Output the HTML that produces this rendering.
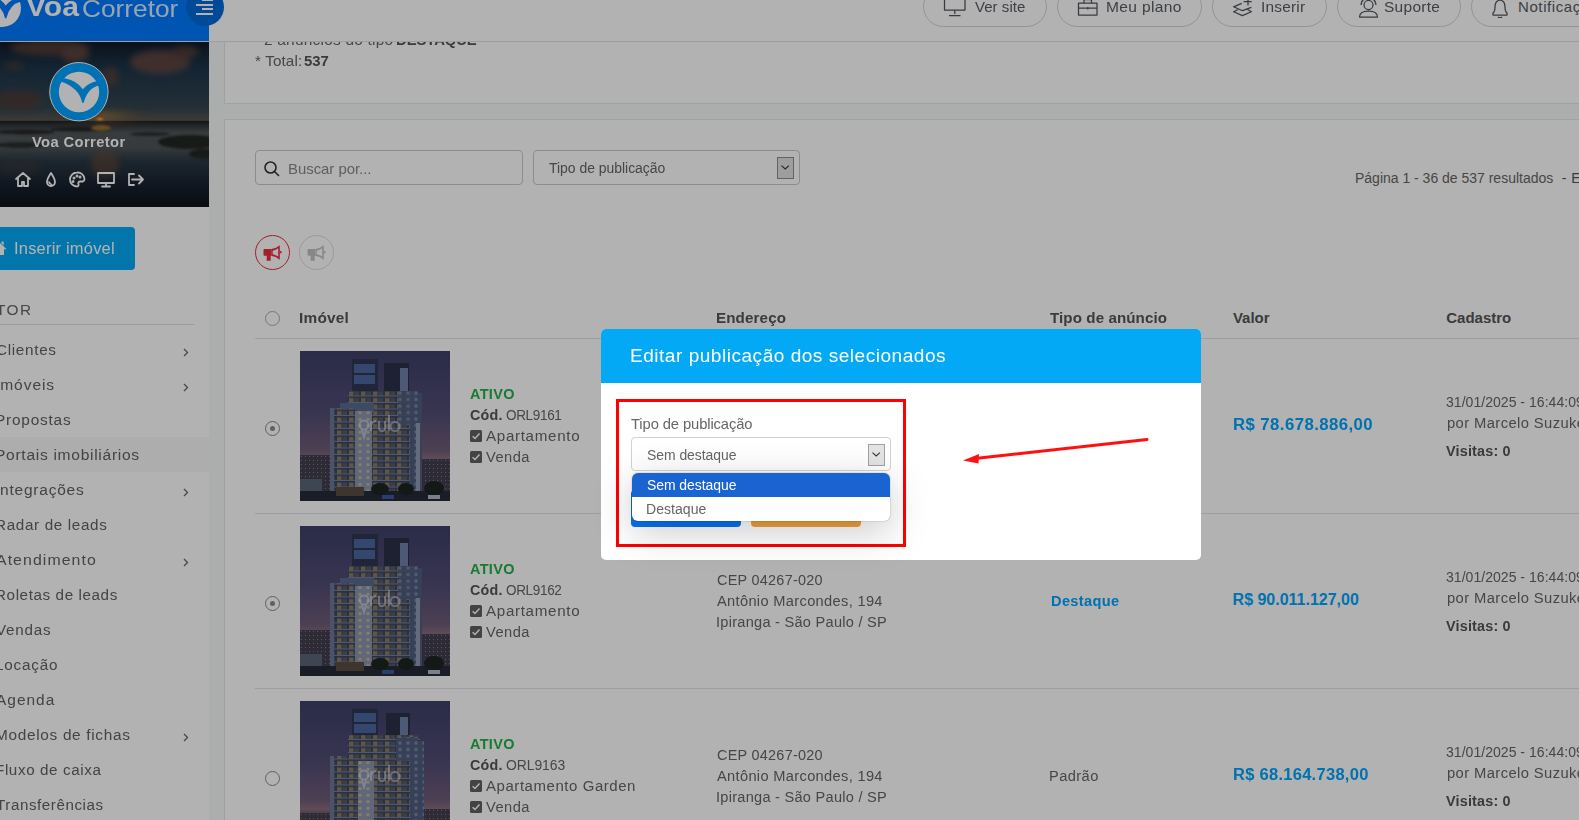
<!DOCTYPE html>
<html><head><meta charset="utf-8">
<style>
*{box-sizing:border-box;margin:0;padding:0}
html,body{width:1579px;height:820px;overflow:hidden;background:#f6f9f8;font-family:"Liberation Sans",sans-serif;color:#555}
.a{position:absolute}
.t{position:absolute;line-height:1;white-space:nowrap}
#page{position:absolute;left:0;top:0;width:1579px;height:820px;overflow:hidden}
#backdrop{position:absolute;left:0;top:0;width:1579px;height:820px;background:rgba(0,0,0,0.3)}
.hb{top:-14px;height:41px;border:1px solid #cfd4da;border-radius:21px}
.cb{width:12px;height:12px;background:#606060;border-radius:1.5px}
</style></head><body>
<svg width="0" height="0" style="position:absolute">
  <defs>
    <linearGradient id="bsky" x1="0" y1="0" x2="0" y2="1">
      <stop offset="0" stop-color="#3e4068"/>
      <stop offset="0.4" stop-color="#514c74"/>
      <stop offset="0.66" stop-color="#6e5c78"/>
      <stop offset="0.72" stop-color="#8a6e7e"/>
      <stop offset="0.78" stop-color="#4e4a5e"/>
      <stop offset="1" stop-color="#2e3040"/>
    </linearGradient>
    <pattern id="balc" width="12" height="6.5" patternUnits="userSpaceOnUse">
      <rect width="12" height="6.5" fill="#3a4560"/>
      <rect x="1" y="1.5" width="4.5" height="4" fill="#8c7a62"/>
      <rect x="6.5" y="1.5" width="4.5" height="4" fill="#5a5a62"/>
      <rect x="0" y="5.5" width="12" height="1" fill="#7280a0"/>
    </pattern>
    <pattern id="wall" width="8" height="6.5" patternUnits="userSpaceOnUse">
      <rect width="8" height="6.5" fill="#4e5c7e"/>
      <rect x="2.5" y="1.5" width="3" height="3" fill="#7c88a4"/>
    </pattern>
    <pattern id="lwall" width="8" height="6.5" patternUnits="userSpaceOnUse">
      <rect width="8" height="6.5" fill="#8a94ac"/>
      <rect x="2.5" y="2" width="3" height="2.5" fill="#c8b894"/>
    </pattern>
    <pattern id="city" width="4" height="4" patternUnits="userSpaceOnUse">
      <rect width="4" height="4" fill="#403e50"/>
      <rect x="1" y="1" width="1" height="1" fill="#8a7a60"/>
    </pattern>
    <g id="orulo" fill="none" stroke="#e8e8f0" stroke-opacity="0.5" stroke-width="2">
      <circle cx="64" cy="74" r="4.5"/>
      <path d="M62 79 L64 86 L66 79"/>
      <path d="M71 70 V80 M71 74 Q73 70 76 70 M79 70 V77 Q79 80 82 80 Q85 80 85 77 V70 M85 79 V80 M89 64 V80"/>
      <circle cx="95" cy="75.5" r="4.5"/>
    </g>
    <symbol id="bld1" viewBox="0 0 150 150">
      <rect width="150" height="150" fill="url(#bsky)"/>
      <rect x="0" y="104" width="32" height="46" fill="url(#city)"/>
      <rect x="120" y="108" width="30" height="42" fill="url(#city)"/>
      <rect x="0" y="128" width="22" height="12" fill="#5a6478"/>
      <!-- crowns -->
      <rect x="52" y="8" width="26" height="36" fill="#2e3650"/>
      <rect x="54" y="13" width="21" height="9" fill="#4a66a0"/>
      <rect x="54" y="24" width="21" height="9" fill="#4a66a0"/>
      <rect x="84" y="12" width="25" height="44" fill="#2a3148"/>
      <rect x="100" y="17" width="8" height="28" fill="#7080a8"/>
      <!-- main mass -->
      <rect x="48" y="40" width="72" height="102" fill="url(#balc)"/>
      <rect x="40" y="52" width="34" height="10" fill="#5a6a90"/>
      <rect x="30" y="57" width="26" height="86" fill="url(#balc)"/>
      <rect x="30" y="57" width="4" height="86" fill="#6a7898"/>
      <rect x="55" y="60" width="17" height="82" fill="url(#lwall)"/>
      <rect x="98" y="40" width="20" height="34" fill="url(#wall)" opacity="0.85"/>
      <rect x="110" y="42" width="12" height="100" fill="url(#wall)"/>
      <rect x="116" y="72" width="4" height="70" fill="#8e9ab4"/>
      <!-- ground -->
      <rect x="0" y="140" width="150" height="10" fill="#262a36"/>
      <ellipse cx="80" cy="138" rx="9" ry="6" fill="#1a2420"/>
      <ellipse cx="106" cy="138" rx="8" ry="6" fill="#1a2420"/>
      <ellipse cx="134" cy="137" rx="10" ry="7" fill="#1a2420"/>
      <rect x="36" y="136" width="28" height="9" fill="#5a4e42"/>
      <rect x="82" y="144" width="12" height="4" fill="#3a5aa0"/>
      <rect x="128" y="144" width="12" height="4" fill="#b0b8c8"/>
      <use href="#orulo"/>
    </symbol>
    <symbol id="bld2" viewBox="0 0 150 150">
      <rect width="150" height="150" fill="url(#bsky)"/>
      <rect x="0" y="112" width="34" height="38" fill="url(#city)"/>
      <rect x="118" y="108" width="32" height="42" fill="url(#city)"/>
      <rect x="52" y="8" width="26" height="30" fill="#2e3650"/>
      <rect x="54" y="12" width="22" height="9" fill="#4a66a0"/>
      <rect x="54" y="23" width="22" height="9" fill="#4a66a0"/>
      <rect x="86" y="12" width="24" height="36" fill="#2a3148"/>
      <rect x="100" y="16" width="8" height="26" fill="#7080a8"/>
      <rect x="48" y="34" width="72" height="116" fill="url(#balc)"/>
      <rect x="30" y="55" width="28" height="95" fill="url(#balc)"/>
      <rect x="30" y="55" width="4" height="95" fill="#6a7898"/>
      <rect x="58" y="60" width="16" height="90" fill="url(#lwall)"/>
      <rect x="96" y="36" width="22" height="24" fill="url(#wall)"/>
      <rect x="110" y="40" width="14" height="110" fill="url(#wall)"/>
      <use href="#orulo"/>
    </symbol>
  </defs>
</svg>
<div id="page">
<div class="a" style="left:224px;top:-20px;width:1400px;height:124px;background:#fff;border:1px solid #e4e7eb"></div>
<div class="t" style="left:264.00px;top:32.10px;font-size:15px;color:#666;letter-spacing:0.208px;transform:scaleX(1.0300);transform-origin:0 0;">2 anúncios do tipo</div>
<div class="t" style="left:396.21px;top:32.10px;font-size:15px;color:#555;font-weight:bold;letter-spacing:-0.103px;transform:scaleX(0.9912);transform-origin:0 0;">DESTAQUE</div>
<div class="t" style="left:254.70px;top:53.30px;font-size:15px;color:#666;letter-spacing:0.113px;transform:scaleX(1.0180);transform-origin:0 0;">* Total:</div>
<div class="t" style="left:304.40px;top:53.30px;font-size:15px;color:#555;font-weight:bold;letter-spacing:-0.072px;transform:scaleX(0.9942);transform-origin:0 0;">537</div>
<div class="a" style="left:224px;top:119px;width:1400px;height:760px;background:#fff;border:1px solid #e4e7eb"></div>
<div class="a" style="left:255px;top:150px;width:268px;height:35px;border:1px solid #c9c9c9;border-radius:4px"></div>
<svg class="a" style="left:263px;top:160px" width="18" height="17" viewBox="0 0 18 17" fill="none" stroke="#333" stroke-width="1.6"><circle cx="7.5" cy="7.5" r="5.5"/><path d="M11.5 11.5 L16 16"/></svg>
<div class="t" style="left:288.40px;top:160.50px;font-size:15px;color:#888;letter-spacing:-0.031px;transform:scaleX(0.9955);transform-origin:0 0;">Buscar por...</div>
<div class="a" style="left:533px;top:150px;width:267px;height:35px;border:1px solid #c9c9c9;border-radius:4px"></div>
<div class="t" style="left:548.90px;top:161.35px;font-size:14px;color:#666;letter-spacing:-0.021px;transform:scaleX(0.9969);transform-origin:0 0;">Tipo de publicação</div>
<div class="a" style="left:777px;top:157px;width:17px;height:22px;border:1px solid #8e8e8e;background:#e2e2e2"></div>
<svg class="a" style="left:777px;top:157px" width="17" height="22" viewBox="0 0 17 22" fill="none" stroke="#333" stroke-width="1.1"><path d="M4.5 8.6 L8.2 12 L11.9 8.6"/></svg>
<div class="t" style="left:1355.00px;top:170.95px;font-size:14px;color:#666;letter-spacing:-0.008px;">Página 1 - 36 de 537 resultados</div>
<div class="t" style="left:1561.70px;top:170.95px;font-size:14px;color:#555;letter-spacing:0.500px;">- Exibir</div>
<div class="a" style="left:255px;top:235px;width:35px;height:35px;border-radius:50%;border:1.4px solid #ec2b40"></div>
<div class="a" style="left:299px;top:235px;width:35px;height:35px;border-radius:50%;border:1px solid #dcdcdc"></div>
<svg class="a" style="left:263px;top:244px" width="19" height="17" viewBox="0 0 19 17"><path d="M1.5 5.1 H8.2 V11.7 H7.7 V16.8 H3.7 V11.7 H1.5 Q0.5 11.7 0.5 10.7 V6.1 Q0.5 5.1 1.5 5.1Z M8 5.1 Q13 4.6 16.8 1.2 V15.7 Q13 12.2 8 11.7Z M9.7 6.7 Q13 6.2 15.2 4.3 V12.6 Q13 10.8 9.7 10.2Z" fill="#ec2b40" fill-rule="evenodd"/><rect x="16.8" y="7" width="1.7" height="2.3" fill="#ec2b40"/></svg>
<svg class="a" style="left:307px;top:244px" width="19" height="17" viewBox="0 0 19 17"><path d="M1.5 5.1 H8.2 V11.7 H7.7 V16.8 H3.7 V11.7 H1.5 Q0.5 11.7 0.5 10.7 V6.1 Q0.5 5.1 1.5 5.1Z M8 5.1 Q13 4.6 16.8 1.2 V15.7 Q13 12.2 8 11.7Z M9.7 6.7 Q13 6.2 15.2 4.3 V12.6 Q13 10.8 9.7 10.2Z" fill="#c2c2c2" fill-rule="evenodd"/><rect x="16.8" y="7" width="1.7" height="2.3" fill="#c2c2c2"/></svg>
<div class="a" style="left:265px;top:311px;width:15px;height:15px;border-radius:50%;border:1px solid #aaa"></div>
<div class="t" style="left:299.27px;top:309.50px;font-size:15px;color:#555;font-weight:bold;letter-spacing:0.229px;transform:scaleX(1.0253);transform-origin:0 0;">Imóvel</div>
<div class="t" style="left:716.19px;top:309.50px;font-size:15px;color:#555;font-weight:bold;letter-spacing:0.113px;transform:scaleX(1.0119);transform-origin:0 0;">Endereço</div>
<div class="t" style="left:1050.20px;top:309.50px;font-size:15px;color:#555;font-weight:bold;letter-spacing:0.079px;transform:scaleX(1.0098);transform-origin:0 0;">Tipo de anúncio</div>
<div class="t" style="left:1232.90px;top:309.50px;font-size:15px;color:#555;font-weight:bold;letter-spacing:0.006px;">Valor</div>
<div class="t" style="left:1446.30px;top:309.50px;font-size:15px;color:#555;font-weight:bold;letter-spacing:-0.011px;">Cadastro</div>
<div class="a" style="left:255px;top:338px;width:1400px;height:1px;background:#dfe3e8"></div>
<div class="a" style="left:255px;top:513px;width:1400px;height:1px;background:#dfe3e8"></div>
<div class="a" style="left:255px;top:688px;width:1400px;height:1px;background:#dfe3e8"></div>
<div class="a" style="left:265px;top:421px;width:15px;height:15px;border-radius:50%;border:1.5px solid #8a8a8a"></div>
<div class="a" style="left:269.8px;top:425.8px;width:5.4px;height:5.4px;border-radius:50%;background:#8a8a8a"></div>
<svg class="a" style="left:300px;top:351px" width="150" height="150"><use href="#bld1"/></svg>
<div class="t" style="left:470.40px;top:386.95px;font-size:14px;color:#22b045;font-weight:bold;letter-spacing:0.321px;transform:scaleX(1.0317);transform-origin:0 0;">ATIVO</div>
<div class="t" style="left:470.40px;top:408.15px;font-size:14px;color:#555;font-weight:bold;letter-spacing:0.226px;transform:scaleX(1.0229);transform-origin:0 0;">Cód.</div>
<div class="t" style="left:506.30px;top:408.15px;font-size:14px;color:#666;letter-spacing:-0.349px;transform:scaleX(0.9664);transform-origin:0 0;">ORL9161</div>
<div class="a cb" style="left:470px;top:430px"></div>
<svg class="a" style="left:470px;top:430px" width="12" height="12" viewBox="0 0 12 12"><path d="M2.6 6.2 L5 8.5 L9.5 3.5" fill="none" stroke="#fff" stroke-width="1.5"/></svg>
<div class="a cb" style="left:470px;top:451px"></div>
<svg class="a" style="left:470px;top:451px" width="12" height="12" viewBox="0 0 12 12"><path d="M2.6 6.2 L5 8.5 L9.5 3.5" fill="none" stroke="#fff" stroke-width="1.5"/></svg>
<div class="t" style="left:486.20px;top:429.15px;font-size:14px;color:#666;letter-spacing:0.620px;transform:scaleX(1.0835);transform-origin:0 0;">Apartamento</div>
<div class="t" style="left:486.20px;top:450.15px;font-size:14px;color:#666;letter-spacing:0.439px;transform:scaleX(1.0460);transform-origin:0 0;">Venda</div>
<div class="t" style="left:717.30px;top:398.15px;font-size:14px;color:#666;letter-spacing:0.253px;transform:scaleX(1.0313);transform-origin:0 0;">CEP 04267-020</div>
<div class="t" style="left:717.30px;top:419.15px;font-size:14px;color:#666;letter-spacing:0.313px;transform:scaleX(1.0451);transform-origin:0 0;">Antônio Marcondes, 194</div>
<div class="t" style="left:716.26px;top:440.15px;font-size:14px;color:#666;letter-spacing:0.255px;transform:scaleX(1.0407);transform-origin:0 0;">Ipiranga - São Paulo / SP</div>
<div class="t" style="left:1050.50px;top:419.15px;font-size:14px;color:#00a4fc;font-weight:bold;letter-spacing:0.348px;transform:scaleX(1.0401);transform-origin:0 0;">Destaque</div>
<div class="t" style="left:1232.55px;top:417.46px;font-size:16px;color:#00a4fc;font-weight:bold;letter-spacing:0.393px;transform:scaleX(1.0490);transform-origin:0 0;">R$ 78.678.886,00</div>
<div class="t" style="left:1446.00px;top:395.15px;font-size:14px;color:#666;letter-spacing:0.019px;transform:scaleX(1.0028);transform-origin:0 0;">31/01/2025 - 16:44:09</div>
<div class="t" style="left:1446.70px;top:416.15px;font-size:14px;color:#666;letter-spacing:0.379px;transform:scaleX(1.0545);transform-origin:0 0;">por Marcelo Suzuke</div>
<div class="t" style="left:1446.00px;top:444.15px;font-size:14px;color:#555;font-weight:bold;letter-spacing:0.182px;transform:scaleX(1.0274);transform-origin:0 0;">Visitas: 0</div>
<div class="a" style="left:265px;top:596px;width:15px;height:15px;border-radius:50%;border:1.5px solid #8a8a8a"></div>
<div class="a" style="left:269.8px;top:600.8px;width:5.4px;height:5.4px;border-radius:50%;background:#8a8a8a"></div>
<svg class="a" style="left:300px;top:526px" width="150" height="150"><use href="#bld1"/></svg>
<div class="t" style="left:470.40px;top:561.95px;font-size:14px;color:#22b045;font-weight:bold;letter-spacing:0.321px;transform:scaleX(1.0317);transform-origin:0 0;">ATIVO</div>
<div class="t" style="left:470.40px;top:583.15px;font-size:14px;color:#555;font-weight:bold;letter-spacing:0.226px;transform:scaleX(1.0229);transform-origin:0 0;">Cód.</div>
<div class="t" style="left:506.30px;top:583.15px;font-size:14px;color:#666;letter-spacing:-0.349px;transform:scaleX(0.9664);transform-origin:0 0;">ORL9162</div>
<div class="a cb" style="left:470px;top:605px"></div>
<svg class="a" style="left:470px;top:605px" width="12" height="12" viewBox="0 0 12 12"><path d="M2.6 6.2 L5 8.5 L9.5 3.5" fill="none" stroke="#fff" stroke-width="1.5"/></svg>
<div class="a cb" style="left:470px;top:626px"></div>
<svg class="a" style="left:470px;top:626px" width="12" height="12" viewBox="0 0 12 12"><path d="M2.6 6.2 L5 8.5 L9.5 3.5" fill="none" stroke="#fff" stroke-width="1.5"/></svg>
<div class="t" style="left:486.20px;top:604.15px;font-size:14px;color:#666;letter-spacing:0.620px;transform:scaleX(1.0835);transform-origin:0 0;">Apartamento</div>
<div class="t" style="left:486.20px;top:625.15px;font-size:14px;color:#666;letter-spacing:0.439px;transform:scaleX(1.0460);transform-origin:0 0;">Venda</div>
<div class="t" style="left:717.30px;top:573.15px;font-size:14px;color:#666;letter-spacing:0.253px;transform:scaleX(1.0313);transform-origin:0 0;">CEP 04267-020</div>
<div class="t" style="left:717.30px;top:594.15px;font-size:14px;color:#666;letter-spacing:0.313px;transform:scaleX(1.0451);transform-origin:0 0;">Antônio Marcondes, 194</div>
<div class="t" style="left:716.26px;top:615.15px;font-size:14px;color:#666;letter-spacing:0.255px;transform:scaleX(1.0407);transform-origin:0 0;">Ipiranga - São Paulo / SP</div>
<div class="t" style="left:1050.50px;top:594.15px;font-size:14px;color:#00a4fc;font-weight:bold;letter-spacing:0.348px;transform:scaleX(1.0401);transform-origin:0 0;">Destaque</div>
<div class="t" style="left:1232.60px;top:592.46px;font-size:16px;color:#00a4fc;font-weight:bold;letter-spacing:-0.008px;">R$ 90.011.127,00</div>
<div class="t" style="left:1446.00px;top:570.15px;font-size:14px;color:#666;letter-spacing:0.019px;transform:scaleX(1.0028);transform-origin:0 0;">31/01/2025 - 16:44:09</div>
<div class="t" style="left:1446.70px;top:591.15px;font-size:14px;color:#666;letter-spacing:0.379px;transform:scaleX(1.0545);transform-origin:0 0;">por Marcelo Suzuke</div>
<div class="t" style="left:1446.00px;top:619.15px;font-size:14px;color:#555;font-weight:bold;letter-spacing:0.182px;transform:scaleX(1.0274);transform-origin:0 0;">Visitas: 0</div>
<div class="a" style="left:265px;top:771px;width:15px;height:15px;border-radius:50%;border:1.5px solid #8a8a8a"></div>
<svg class="a" style="left:300px;top:701px" width="150" height="150"><use href="#bld2"/></svg>
<div class="t" style="left:470.40px;top:736.95px;font-size:14px;color:#22b045;font-weight:bold;letter-spacing:0.321px;transform:scaleX(1.0317);transform-origin:0 0;">ATIVO</div>
<div class="t" style="left:470.40px;top:758.15px;font-size:14px;color:#555;font-weight:bold;letter-spacing:0.226px;transform:scaleX(1.0229);transform-origin:0 0;">Cód.</div>
<div class="t" style="left:506.30px;top:758.15px;font-size:14px;color:#666;letter-spacing:-0.062px;transform:scaleX(0.9938);transform-origin:0 0;">ORL9163</div>
<div class="a cb" style="left:470px;top:780px"></div>
<svg class="a" style="left:470px;top:780px" width="12" height="12" viewBox="0 0 12 12"><path d="M2.6 6.2 L5 8.5 L9.5 3.5" fill="none" stroke="#fff" stroke-width="1.5"/></svg>
<div class="a cb" style="left:470px;top:801px"></div>
<svg class="a" style="left:470px;top:801px" width="12" height="12" viewBox="0 0 12 12"><path d="M2.6 6.2 L5 8.5 L9.5 3.5" fill="none" stroke="#fff" stroke-width="1.5"/></svg>
<div class="t" style="left:486.20px;top:779.15px;font-size:14px;color:#666;letter-spacing:0.512px;transform:scaleX(1.0717);transform-origin:0 0;">Apartamento Garden</div>
<div class="t" style="left:486.20px;top:800.15px;font-size:14px;color:#666;letter-spacing:0.439px;transform:scaleX(1.0460);transform-origin:0 0;">Venda</div>
<div class="t" style="left:717.30px;top:748.15px;font-size:14px;color:#666;letter-spacing:0.253px;transform:scaleX(1.0313);transform-origin:0 0;">CEP 04267-020</div>
<div class="t" style="left:717.30px;top:769.15px;font-size:14px;color:#666;letter-spacing:0.313px;transform:scaleX(1.0451);transform-origin:0 0;">Antônio Marcondes, 194</div>
<div class="t" style="left:716.26px;top:790.15px;font-size:14px;color:#666;letter-spacing:0.255px;transform:scaleX(1.0407);transform-origin:0 0;">Ipiranga - São Paulo / SP</div>
<div class="t" style="left:1049.45px;top:769.15px;font-size:14px;color:#666;letter-spacing:0.396px;transform:scaleX(1.0467);transform-origin:0 0;">Padrão</div>
<div class="t" style="left:1232.57px;top:767.46px;font-size:16px;color:#00a4fc;font-weight:bold;letter-spacing:0.261px;transform:scaleX(1.0320);transform-origin:0 0;">R$ 68.164.738,00</div>
<div class="t" style="left:1446.00px;top:745.15px;font-size:14px;color:#666;letter-spacing:0.019px;transform:scaleX(1.0028);transform-origin:0 0;">31/01/2025 - 16:44:09</div>
<div class="t" style="left:1446.70px;top:766.15px;font-size:14px;color:#666;letter-spacing:0.379px;transform:scaleX(1.0545);transform-origin:0 0;">por Marcelo Suzuke</div>
<div class="t" style="left:1446.00px;top:794.15px;font-size:14px;color:#555;font-weight:bold;letter-spacing:0.182px;transform:scaleX(1.0274);transform-origin:0 0;">Visitas: 0</div>
<div class="a" style="left:209px;top:0;width:1370px;height:42px;background:#fff;border-bottom:1px solid #e3e3e3"></div>
<div class="a hb" style="left:923px;width:124px"></div>
<div class="a hb" style="left:1057px;width:145px"></div>
<div class="a hb" style="left:1212px;width:115px"></div>
<div class="a hb" style="left:1337px;width:124px"></div>
<div class="a hb" style="left:1471px;width:160px"></div>
<div class="t" style="left:975.00px;top:-0.70px;font-size:15px;color:#575b63;letter-spacing:0.023px;transform:scaleX(1.0032);transform-origin:0 0;">Ver site</div>
<div class="t" style="left:1105.96px;top:-0.70px;font-size:15px;color:#575b63;letter-spacing:0.319px;transform:scaleX(1.0385);transform-origin:0 0;">Meu plano</div>
<div class="t" style="left:1260.97px;top:-0.70px;font-size:15px;color:#575b63;letter-spacing:0.188px;transform:scaleX(1.0285);transform-origin:0 0;">Inserir</div>
<div class="t" style="left:1384.00px;top:-0.70px;font-size:15px;color:#575b63;letter-spacing:0.275px;transform:scaleX(1.0326);transform-origin:0 0;">Suporte</div>
<div class="t" style="left:1518.00px;top:-0.70px;font-size:15px;color:#575b63;letter-spacing:0.600px;">Notificações</div>
<svg class="a" style="left:940px;top:-4px" width="600" height="22" viewBox="0 0 600 22" fill="none" stroke="#50545c" stroke-width="1.25" stroke-linejoin="round">
    <path d="M4.5 0.5 H25 V14 H4.5Z M14.8 14 V18 M9 19.5 H20.5"/>
    <path d="M138.5 7 H157 V19 H138.5Z M138.5 12 H157 M144 7 V3.5 H151.5 V7 M147.8 11 V13.5"/>
    <path d="M301.7 7.4 L293.6 10.8 L302.4 14.7 L311.4 11.3 M297.8 13.8 L293.6 15.7 L302.4 19.6 L311.4 15.7 L307.5 13.5 M308 3 V9.4 M303.6 5.5 H311.7"/>
    <path d="M424 9 A4.5 4.5 0 1 0 433 9 A4.5 4.5 0 1 0 424 9 M419.5 21 Q419.5 15 428.5 15 Q437.5 15 437.5 21Z M421 9 A7.5 7.5 0 0 1 436 9"/>
    <path d="M553 19 V17 Q555 15.5 555 11 Q555 5 560 4 Q565 5 565 11 Q565 15.5 567 17 V19Z M558 21 Q560 23 562 21 M560 2 V4"/>
  </svg>
<div class="a" style="left:0;top:0;width:209px;height:820px;background:#fff"></div>
<div class="a" style="left:0;top:0;width:209px;height:41px;background:#0079ff"></div>
<div class="a" style="left:0;top:41px;width:209px;height:1px;background:#e6e6e6"></div>
<svg class="a" style="left:-17px;top:-11.2px" width="38" height="38" viewBox="0 0 38 38">
      <circle cx="19" cy="19" r="19" fill="#fff"/>
      <g transform="translate(19 19) scale(0.94) translate(-30 -30)"><path d="M15.5 16.2 Q28 18.5 33.8 27.3 Q39.5 20.5 47.6 19.2 L50.2 23.2 Q38.5 26 34.6 40.8 L33.2 40.8 Q30 25.5 11.5 19.6 Z" fill="#0079ff"/></g>
    </svg>
<div class="t" style="left:26.00px;top:-6.36px;font-size:27px;color:#fff;font-weight:bold;transform:scaleX(1.1135);transform-origin:0 0;">Voa</div>
<div class="t" style="left:81.51px;top:-3.32px;font-size:24px;color:rgba(255,255,255,0.85);transform:scaleX(1.0939);transform-origin:0 0;">Corretor</div>
<div class="a" style="left:186px;top:-12px;width:38px;height:38px;border-radius:50%;background:#006ad8"></div>
<div class="a" style="left:202px;top:-1px;width:11px;height:2px;background:#fff"></div>
<div class="a" style="left:196px;top:3.6px;width:17px;height:2px;background:#fff"></div>
<div class="a" style="left:202px;top:8.1px;width:11px;height:2px;background:#fff"></div>
<div class="a" style="left:196px;top:12.9px;width:17px;height:2px;background:#fff"></div>
<svg class="a" style="left:0;top:42px" width="209" height="165" viewBox="0 0 209 165">
      <defs>
        <linearGradient id="sky" x1="0" y1="0" x2="0" y2="1">
          <stop offset="0" stop-color="#0f1a28"/>
          <stop offset="0.15" stop-color="#1c3448"/>
          <stop offset="0.40" stop-color="#34444f"/>
          <stop offset="0.475" stop-color="#56544e"/>
          <stop offset="0.48" stop-color="#1e2020"/>
          <stop offset="0.5" stop-color="#2e3234"/>
          <stop offset="0.55" stop-color="#52565a"/>
          <stop offset="0.64" stop-color="#4e5458"/>
          <stop offset="0.72" stop-color="#2a3844"/>
          <stop offset="0.86" stop-color="#182230"/>
          <stop offset="1" stop-color="#0c1218"/>
        </linearGradient>
        <radialGradient id="sun" cx="0.5" cy="0.5" r="0.5">
          <stop offset="0" stop-color="#ffc040" stop-opacity="1"/>
          <stop offset="0.35" stop-color="#d08030" stop-opacity="0.7"/>
          <stop offset="1" stop-color="#604030" stop-opacity="0"/>
        </radialGradient>
        <filter id="bl" x="-50%" y="-50%" width="200%" height="200%"><feGaussianBlur stdDeviation="3"/></filter>
        <filter id="bl2" x="-50%" y="-50%" width="200%" height="200%"><feGaussianBlur stdDeviation="1.2"/></filter>
      </defs>
      <rect width="209" height="165" fill="url(#sky)"/>
      <g filter="url(#bl)" opacity="0.8">
        <ellipse cx="50" cy="6" rx="40" ry="8" fill="#5a4038"/>
        <ellipse cx="75" cy="12" rx="14" ry="8" fill="#6a4a3e"/>
        <ellipse cx="160" cy="20" rx="30" ry="12" fill="#6a4a40"/><ellipse cx="185" cy="10" rx="14" ry="6" fill="#5a4038"/>
        
        <ellipse cx="110" cy="35" rx="9" ry="10" fill="#5a4038"/>
        <ellipse cx="18" cy="58" rx="24" ry="10" fill="#4e3a34"/>
        <ellipse cx="14" cy="24" rx="10" ry="4" fill="#4a3a34"/>
      </g>
      <ellipse cx="102" cy="74" rx="55" ry="9" fill="url(#sun)" opacity="0.45" filter="url(#bl)"/>
      <ellipse cx="100" cy="77" rx="8" ry="4" fill="url(#sun)"/>
      <g filter="url(#bl2)">
        <ellipse cx="25" cy="90" rx="30" ry="2.5" fill="#262828"/>
        <ellipse cx="80" cy="87" rx="30" ry="2.5" fill="#262828"/>
        <ellipse cx="20" cy="103" rx="26" ry="3" fill="#2a2e2e"/>
        <ellipse cx="190" cy="100" rx="32" ry="7" fill="#222624"/>
        <ellipse cx="205" cy="112" rx="16" ry="5" fill="#222624"/>
        <ellipse cx="150" cy="92" rx="20" ry="2" fill="#2a2e2e"/>
      </g>
      <ellipse cx="101" cy="86" rx="10" ry="3" fill="#c08a34" opacity="0.7" filter="url(#bl2)"/>
      <ellipse cx="105" cy="122" rx="14" ry="14" fill="#6a4a38" opacity="0.55" filter="url(#bl)"/>
      <ellipse cx="20" cy="126" rx="22" ry="8" fill="#4a3a34" opacity="0.35" filter="url(#bl)"/>
    </svg>
<svg class="a" style="left:49px;top:62px" width="60" height="60" viewBox="0 0 60 60">
      <circle cx="29.9" cy="29.7" r="29.2" fill="#00a2ff" stroke="#fff" stroke-width="1"/>
      <circle cx="30" cy="30" r="20.2" fill="#fff"/>
      <path d="M15.5 16.2 Q28 18.5 33.8 27.3 Q39.5 20.5 47.6 19.2 L50.2 23.2 Q38.5 26 34.6 40.8 L33.2 40.8 Q30 25.5 11.5 19.6 Z" fill="#00a2ff"/>
    </svg>
<div class="t" style="left:32.00px;top:134.95px;font-size:14px;color:#fff;font-weight:bold;letter-spacing:0.377px;transform:scaleX(1.0512);transform-origin:0 0;">Voa Corretor</div>
<svg class="a" style="left:14px;top:171px" width="132" height="17" viewBox="0 0 132 17" fill="none" stroke="#fff" stroke-width="1.8" stroke-linejoin="round" stroke-linecap="round">
      <path d="M2 8 L9 2 L16 8 M4 7 V15 H8 V11 H10 V15 H14 V7"/>
      <path d="M37 2 Q33 8 33 11 A4 4 0 0 0 41 11 Q41 8 37 2Z M35 11 Q35.5 13 37.5 13.5"/>
      <path d="M63 1.5 A7 7 0 1 0 63 15.5 Q65 15.5 64.5 13 Q63.5 11 66 10.5 L69 10.5 Q70.5 10 70.5 8 A7 7 0 0 0 63 1.5Z"/>
      <circle cx="60" cy="7" r="0.6" fill="#fff"/><circle cx="63" cy="5" r="0.6" fill="#fff"/><circle cx="66" cy="6" r="0.6" fill="#fff"/><circle cx="59" cy="10.5" r="0.6" fill="#fff"/>
      <path d="M84 2 H100 V12 H84Z M92 12 V15 M88 15.5 H96"/>
      <path d="M120 3 H115 V14 H120 M118 8.5 H129 M125 4.5 L129 8.5 L125 12.5"/>
    </svg>
<div class="a" style="left:-10px;top:227px;width:145px;height:43px;background:#03a9f4;border-radius:4px"></div>
<svg class="a" style="left:-8px;top:240px" width="16" height="16" viewBox="0 0 16 16"><path d="M0 9 L7 2 L14.2 8.8 L13.2 9.8 L12 8.7 V15 H1.5 V9.5Z M9.5 1.5 H11.7 V5.5 L9.5 3.5Z" fill="#fff"/></svg>
<div class="t" style="left:13.97px;top:240.76px;font-size:16px;color:#fff;letter-spacing:0.203px;transform:scaleX(1.0290);transform-origin:0 0;">Inserir imóvel</div>
<div class="t" style="left:-4.00px;top:303.15px;font-size:14px;color:#666;letter-spacing:1.321px;transform:scaleX(1.0996);transform-origin:0 0;">TOR</div>
<div class="a" style="left:0;top:324px;width:194px;height:1px;background:#e0e0e0"></div>
<div class="a" style="left:0;top:437px;width:209px;height:35px;background:#f8f8fa"></div>
<div class="t" style="left:-4.00px;top:342.85px;font-size:14px;color:#626262;letter-spacing:0.616px;transform:scaleX(1.0931);transform-origin:0 0;">Clientes</div>
<div class="t" style="left:-5.11px;top:377.85px;font-size:14px;color:#626262;letter-spacing:0.805px;transform:scaleX(1.1140);transform-origin:0 0;">Imóveis</div>
<div class="t" style="left:-5.10px;top:412.85px;font-size:14px;color:#626262;letter-spacing:0.708px;transform:scaleX(1.1005);transform-origin:0 0;">Propostas</div>
<div class="t" style="left:-5.11px;top:447.85px;font-size:14px;color:#626262;letter-spacing:0.627px;transform:scaleX(1.1138);transform-origin:0 0;">Portais imobiliários</div>
<div class="t" style="left:-5.11px;top:482.85px;font-size:14px;color:#626262;letter-spacing:0.697px;transform:scaleX(1.1070);transform-origin:0 0;">Integrações</div>
<div class="t" style="left:-5.09px;top:517.85px;font-size:14px;color:#626262;letter-spacing:0.591px;transform:scaleX(1.0891);transform-origin:0 0;">Radar de leads</div>
<div class="t" style="left:-4.00px;top:552.85px;font-size:14px;color:#626262;letter-spacing:0.934px;transform:scaleX(1.1344);transform-origin:0 0;">Atendimento</div>
<div class="t" style="left:-5.09px;top:587.85px;font-size:14px;color:#626262;letter-spacing:0.549px;transform:scaleX(1.0867);transform-origin:0 0;">Roletas de leads</div>
<div class="t" style="left:-4.00px;top:622.85px;font-size:14px;color:#626262;letter-spacing:0.736px;transform:scaleX(1.0855);transform-origin:0 0;">Vendas</div>
<div class="t" style="left:-5.09px;top:657.85px;font-size:14px;color:#626262;letter-spacing:0.729px;transform:scaleX(1.0916);transform-origin:0 0;">Locação</div>
<div class="t" style="left:-4.00px;top:692.85px;font-size:14px;color:#626262;letter-spacing:0.908px;transform:scaleX(1.1033);transform-origin:0 0;">Agenda</div>
<div class="t" style="left:-5.10px;top:727.85px;font-size:14px;color:#626262;letter-spacing:0.625px;transform:scaleX(1.0982);transform-origin:0 0;">Modelos de fichas</div>
<div class="t" style="left:-5.09px;top:762.85px;font-size:14px;color:#626262;letter-spacing:0.549px;transform:scaleX(1.0867);transform-origin:0 0;">Fluxo de caixa</div>
<div class="t" style="left:-4.00px;top:797.85px;font-size:14px;color:#626262;letter-spacing:0.534px;transform:scaleX(1.0816);transform-origin:0 0;">Transferências</div>
<svg class="a" style="left:182px;top:346px" width="8" height="400" viewBox="0 0 8 400" fill="none" stroke="#666" stroke-width="1.3"><path d="M2 3 L5.5 6.5 L2 10"/><path d="M2 38 L5.5 41.5 L2 45"/><path d="M2 143 L5.5 146.5 L2 150"/><path d="M2 213 L5.5 216.5 L2 220"/><path d="M2 388 L5.5 391.5 L2 395"/></svg>
</div>
<div id="backdrop"></div>
<div id="modal">
<div class="a" style="left:601px;top:329px;width:600px;height:231px;background:#fff;border-radius:5px;overflow:hidden"><div class="a" style="left:0;top:0;width:600px;height:54px;background:#03a9f4"></div></div>
<div class="t" style="left:630.44px;top:346.56px;font-size:18px;color:#fff;letter-spacing:0.477px;transform:scaleX(1.0592);transform-origin:0 0;">Editar publicação dos selecionados</div>
<div class="a" style="left:616px;top:399px;width:290px;height:148px;border:3px solid #ff0000"></div>
<div class="t" style="left:630.90px;top:415.60px;font-size:15px;color:#666;letter-spacing:-0.114px;transform:scaleX(0.9847);transform-origin:0 0;">Tipo de publicação</div>
<div class="a" style="left:631px;top:437px;width:260px;height:34px;border:1px solid #d2d2d2;border-radius:4px;background:#fff"></div>
<div class="t" style="left:646.70px;top:448.35px;font-size:14px;color:#666;letter-spacing:-0.036px;transform:scaleX(0.9956);transform-origin:0 0;">Sem destaque</div>
<div class="a" style="left:868px;top:444px;width:17px;height:22px;border:1px solid #a2a2a2;background:#e4e4e4"></div>
<svg class="a" style="left:868px;top:444px" width="17" height="22" viewBox="0 0 17 22" fill="none" stroke="#333" stroke-width="1.1"><path d="M4.5 8.6 L8.2 12 L11.9 8.6"/></svg>
<div class="a" style="left:631px;top:490px;width:110px;height:37px;background:#0a72f2;border-radius:4px"></div>
<div class="a" style="left:751px;top:490px;width:110px;height:37px;background:#f0a23e;border-radius:4px"></div>
<div class="a" style="left:632px;top:473px;width:258px;height:48px;border-radius:6px;background:#fff;overflow:hidden;box-shadow:0 10px 40px rgba(0,0,0,0.22), 0 0 1.5px rgba(0,0,0,0.4)"><div class="a" style="left:0;top:0;width:258px;height:24px;background:#1a64d2"></div></div>
<div class="t" style="left:647.40px;top:477.55px;font-size:14px;color:#fff;letter-spacing:-0.041px;transform:scaleX(0.9950);transform-origin:0 0;">Sem destaque</div>
<div class="t" style="left:646.40px;top:501.95px;font-size:14px;color:#666;letter-spacing:0.025px;transform:scaleX(1.0030);transform-origin:0 0;">Destaque</div>
<svg class="a" style="left:955px;top:430px" width="200" height="40" viewBox="955 430 200 40">
    <path d="M1147 439.5 L975 458.5" stroke="#ff1010" stroke-width="3" stroke-linecap="round"/>
    <path d="M963 460.4 L979 454 L978.5 463.5Z" fill="#ff1010"/>
  </svg>
</div>
</body></html>
